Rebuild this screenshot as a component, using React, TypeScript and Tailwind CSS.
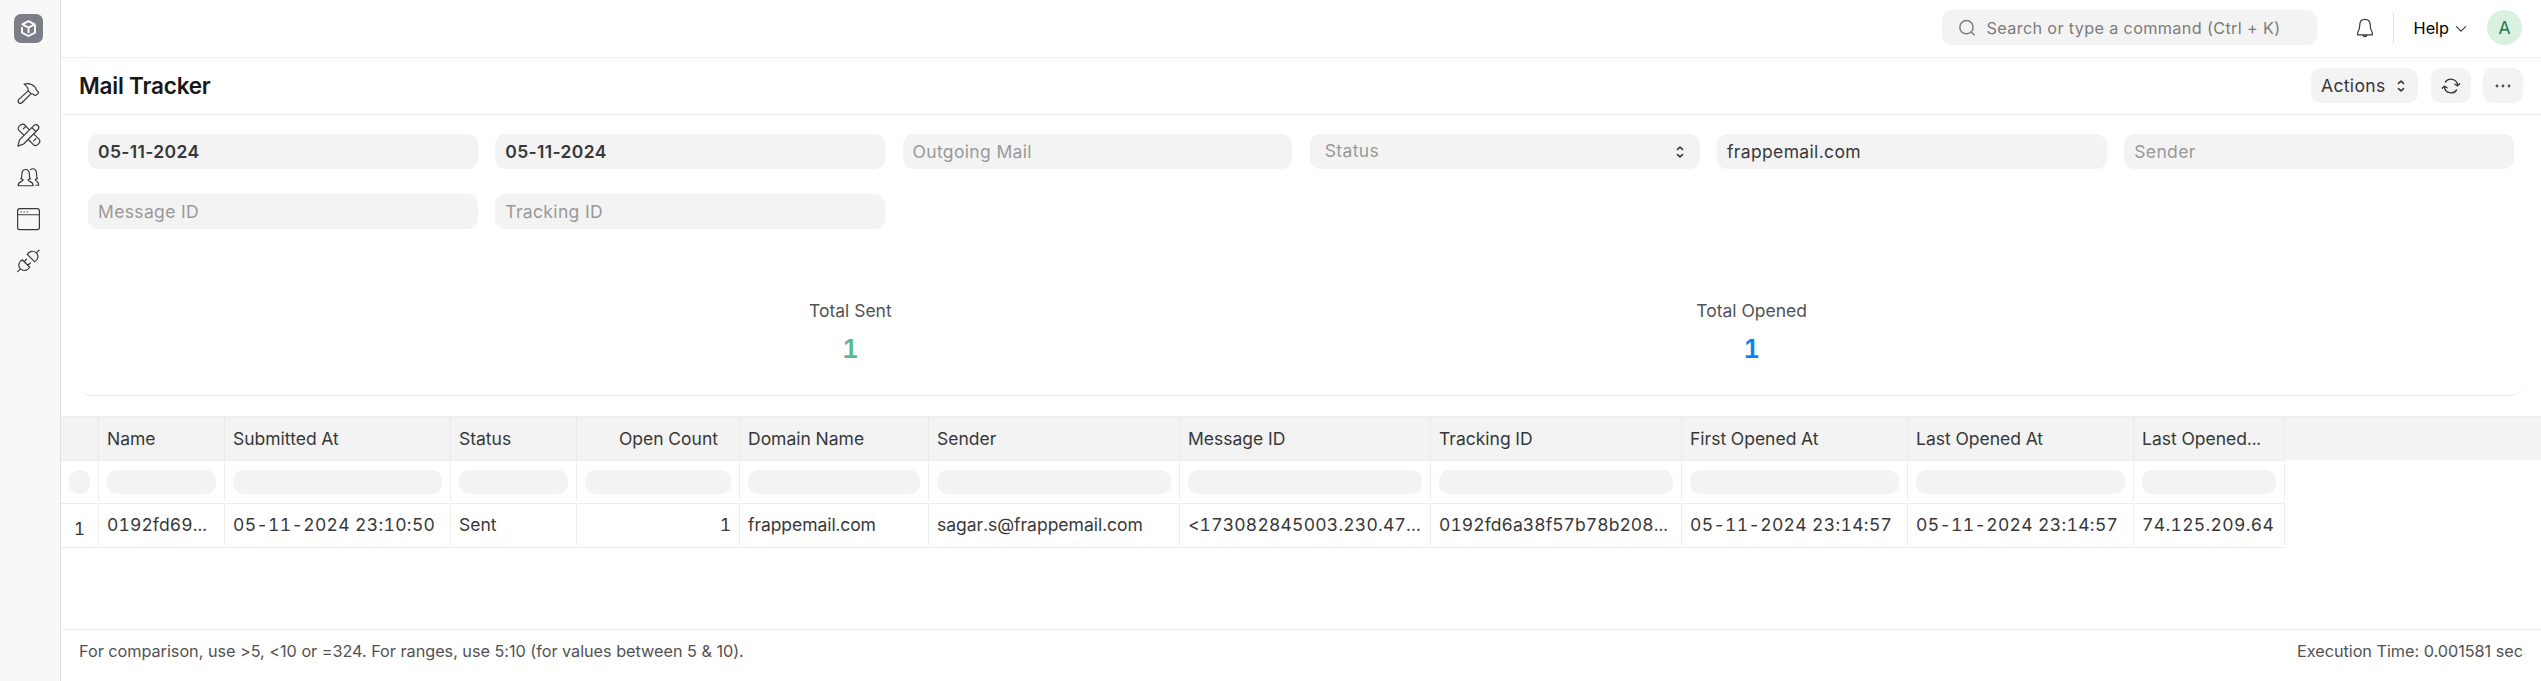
import React from "react";

const Sort = ({ className = "" }: { className?: string }) => (
  <svg className={className} width="20" height="20" viewBox="0 0 16 16" fill="none" stroke="#383838" strokeWidth="1.250" strokeLinecap="round" strokeLinejoin="round">
    <path d="M6 5.900 8 4.100l2 1.800M6 10.100 8 11.900l2-1.800" />
  </svg>
);

const side = { width: 25, height: 25, viewBox: "0 0 20 20", fill: "none", stroke: "#383838", strokeWidth: 0.95, strokeLinecap: "round", strokeLinejoin: "round" } as const;

const Sidebar = () => (
  <aside className="flex w-[61px] shrink-0 flex-col items-center border-r border-[#e2e2e2] bg-[#f8f8f8] pr-[3px] pt-[14px]">
    <svg width="29" height="29" viewBox="0 0 29 29">
      <rect width="29" height="29" rx="7" fill="#7c7f88" />
      <g fill="none" stroke="#fff" strokeWidth="1.9" strokeLinejoin="round">
        <path d="M14.5 7.2 20.6 10.4 14.5 13.6 8.4 10.4ZM8 13v5.6l6.5 3.4 6.5-3.4V11M14.5 13.6V19" />
      </g>
    </svg>
    <nav className="mt-[38px] flex flex-col gap-[17px]">
      <svg {...side}>
        <path d="M6.8 2.4c3-.9 6.600 0 8.600 2.200 1 1.100 1 2.400 1.600 3l1.200.9-.1 1.300-1.900 1.600-1.300-.2c-.6-.7-1.600-1.200-2.600-1.200L5.300 17.100c-1 1-2.500.9-3-.1-.6-.8-.3-1.900.5-2.600l7.300-6.600c.2-1.900-.7-3.500-3.300-5.400ZM10.100 7.800l2.200 2.200" transform="translate(-.3 .1)" />
      </svg>
      <svg {...side}>
        <path d="M1.500 18.500l1.300-5L14.200 2.100c1-1 2.400-1 3.300-.1s.9 2.400-.1 3.400L6.100 16.800ZM12.700 3.700l3.200 3.100M6.400 9.900 2.300 5.900c-1-1-.6-2.500.8-3.800s2.900-1.600 3.900-.5l3.600 3.900M10 13.400l4.100 4.100c1 1 2.600.5 3.900-.8s1.400-2.700.4-3.800l-4.100-4M5.800 4.700l1.700-1.600M14.200 14.200l1.700-1.700" />
      </svg>
      <svg {...side}>
        <path d="M5.900 11.200c-1.200-.3-1.700-.5-1.700-.5C5.200 9.600 4.900 8.300 5 6.500 5.200 4.300 6.300 3.200 8 3.200s2.800 1.100 3 3.300c.1 1.800-.2 3.100.8 4.200 0 0-.5.200-1.700.5-.3 1 .4 1.300 1.500 1.700 1.700.6 2.400 1.200 2.400 3.300H2c0-2.100.7-2.700 2.400-3.300 1.100-.4 1.800-.7 1.500-1.700ZM12 3.300c.4-.5 1-.700 1.700-.7 1.700 0 2.800 1.200 3 3.300.1 1.800-.1 3.500.8 4.600l-1.700.6c-.2.900.3 1.200 1.100 1.500 1.200.5 1.500 1.300 1.500 3.200h-2.200" transform="translate(-.3 .4)" />
      </svg>
      <svg {...side}>
        <rect x="1.300" y="1.300" width="17.400" height="16.800" rx="1.700" />
        <path d="M1.300 6.200h17.400M4 3.900h.1M6.500 3.900h.1M9 3.900h.1" />
      </svg>
      <svg {...side}>
        <path d="m1.300 18.700 2.200-2.200M18.500 1.500l-2.200 2.200M5 9.200l6 6c-1.800 2.700-5 3.500-7.500 1.300C1.300 14 2.100 11 5 9.200ZM9 4.900l6 6c2.700-1.900 3.500-4.700 1.300-7.200C13.800 1.500 10.700 2.200 9 4.900ZM6.500 10.700l1.900-1.900M9.500 13.700l1.900-1.900" transform="translate(0 -.6)" />
      </svg>
    </nav>
  </aside>
);

const field = "flex h-[35px] items-center rounded-[10px] bg-[#f3f3f3] px-[10px] text-[17.5px] tracking-[0.35px]";

const columns = [
  { w: "w-[126px]", h: "Name", v: "0192fd69...", t: "tracking-[0.12px]" },
  { w: "w-[226px]", h: "Submitted At", v: "05-11-2024 23:10:50", t: "tracking-[0.35px]" },
  { w: "w-[126px]", h: "Status", v: "Sent", t: "" },
  { w: "w-[163px]", h: "Open Count", v: "1", right: true, t: "" },
  { w: "w-[189px]", h: "Domain Name", v: "frappemail.com", t: "tracking-[-0.06px]" },
  { w: "w-[251px]", h: "Sender", v: "sagar.s@frappemail.com", t: "" },
  { w: "w-[251px]", h: "Message ID", v: "<173082845003.230.47...", t: "tracking-[0.22px]" },
  { w: "w-[251px]", h: "Tracking ID", v: "0192fd6a38f57b78b208...", t: "tracking-[0.07px]" },
  { w: "w-[226px]", h: "First Opened At", v: "05-11-2024 23:14:57", t: "tracking-[0.35px]" },
  { w: "w-[226px]", h: "Last Opened At", v: "05-11-2024 23:14:57", t: "tracking-[0.35px]" },
  { w: "w-[151px]", h: "Last Opened...", v: "74.125.209.64", t: "tracking-[0.35px]" },
];

export default function App() {
  return (
    <div className="flex h-[681px] w-[2541px] overflow-hidden bg-white font-[Inter,sans-serif] text-[17.5px] leading-[20px] text-[#383838]">
      <Sidebar />
      <div className="flex min-w-0 flex-1 flex-col">
        <header className="flex h-[58px] shrink-0 items-start justify-end border-b border-[#ededed] pr-[19px] pt-[10px]">
          <div className="flex h-[35px] w-[375px] items-center rounded-[10px] bg-[#f3f3f3] pl-[16px] text-[16.25px] tracking-[0.33px] text-[#7c7c7c]">
            <svg className="mr-[11px]" width="18" height="18" viewBox="0 0 16 16" fill="none" stroke="#7c7c7c" strokeWidth="1.3" strokeLinecap="round">
              <circle cx="7.500" cy="7.300" r="5.900" />
              <path d="m11.800 11.600 2.600 2.600" />
            </svg>
            Search or type a command (Ctrl + K)
          </div>
          <svg className="ml-[38px] mt-[7px]" width="20" height="22" viewBox="0 0 20 22" fill="none" stroke="#383838" strokeWidth="1.200" strokeLinejoin="round">
            <path d="M10 2.300C6.500 2.300 4.800 4.600 4.800 7.700c0 4-.6 5.800-2.100 7.600v2.500h14.600v-2.500c-1.500-1.800-2.100-3.600-2.100-7.600C15.200 4.600 13.500 2.300 10 2.300ZM8 18c.3 1.200 1 1.600 2 1.600s1.700-.4 2-1.600" />
          </svg>
          <div className="ml-[18px] mt-[3px] h-[30px] w-px bg-[#dcdcdc]" />
          <div className="ml-[20px] flex h-[35px] items-center text-[16.25px] text-black">
            Help
            <svg className="ml-[6px] mt-[3px]" width="12" height="8" viewBox="0 0 12 8" fill="none" stroke="#383838" strokeWidth="1.100" strokeLinecap="round" strokeLinejoin="round"><path d="m1.400 1.600 4.600 4.600 4.600-4.600" /></svg>
          </div>
          <div className="ml-[20px] flex size-[35px] items-center justify-center rounded-full bg-[#daf0e1] text-[17.5px] text-[#16794c]">A</div>
        </header>

        <div className="flex h-[57px] shrink-0 items-center justify-between border-b border-[#ededed] pb-px pl-[18px] pr-[18px]">
          <h1 className="text-[22.5px] font-semibold leading-[28px] tracking-[-0.2px] text-[#171717]">Mail Tracker</h1>
          <div className="flex">
            <div className="flex h-[35px] w-[107px] items-center rounded-[10px] bg-[#f3f3f3] pl-[10px] tracking-[0.35px]">
              Actions <Sort className="ml-[5px]" />
            </div>
            <div className="ml-[13px] flex h-[35px] w-[40px] items-center justify-center rounded-[10px] bg-[#f3f3f3]">
              <svg width="20" height="20" viewBox="0 0 20 20" fill="none" stroke="#383838" strokeWidth="1.300" strokeLinecap="round" strokeLinejoin="round">
                <path d="M3.400 11.500A6.800 6.800 0 0 0 15.600 14M16.600 8.500A6.800 6.800 0 0 0 4.400 6M1.300 12.300l2.100-2.200 2.700 1.700M18.700 7.700l-2.100 2.200-2.700-1.700" />
              </svg>
            </div>
            <div className="ml-[12px] flex h-[35px] w-[40px] items-center justify-center rounded-[10px] bg-[#f3f3f3]">
              <svg width="20" height="20" viewBox="0 0 20 20" fill="#525252"><circle cx="4" cy="10" r="1.400" /><circle cx="10" cy="10" r="1.400" /><circle cx="16" cy="10" r="1.400" /></svg>
            </div>
          </div>
        </div>

        <div className="grid grid-cols-6 gap-x-[17.5px] gap-y-[25px] px-[27px] pt-[19px] text-[#999]">
          <div className={field + " font-semibold text-[#383838]"}>05-11-2024</div>
          <div className={field + " font-semibold text-[#383838]"}>05-11-2024</div>
          <div className={field}>Outgoing Mail</div>
          <div className={field + " justify-between"}>
            <span className="pb-[2px] pl-[5px]">Status</span>
            <Sort />
          </div>
          <div className={field + " text-[#383838]"}>frappemail.com</div>
          <div className={field}>Sender</div>
          <div className={field}>Message ID</div>
          <div className={field}>Tracking ID</div>
        </div>

        <div className="mx-[18px] mt-[46px] flex h-[121px] justify-evenly rounded-b-[12px] border-b border-[#ededed] pt-[26px]">
          <div className="flex w-[260px] flex-col items-center">
            <div className="text-[#525252]">Total Sent</div>
            <div className="mt-[12px] text-[26px] font-semibold leading-[32px] tabular-nums text-[#59ba8b]">1</div>
          </div>
          <div className="flex w-[260px] flex-col items-center">
            <div className="text-[#525252]">Total Opened</div>
            <div className="mt-[12px] text-[26px] font-semibold leading-[32px] tabular-nums text-[#0289f7]">1</div>
          </div>
        </div>

        <div className="mt-[20px] tabular-nums">
          <div className="flex h-[44px] border-t border-[#ededed] bg-[#f3f3f3]">
            <div className="h-[42px] w-[38px] border-r border-[#e9e9e9]" />
            {columns.map((c, i) => (
              <div key={i} className={`${c.w} flex h-[42px] items-center whitespace-nowrap border-r border-[#e9e9e9] pl-[8px] pt-[2px] ${c.right ? "justify-end pr-[21px]" : ""}`}>{c.h}</div>
            ))}
          </div>
          <div className="flex h-[44px] w-[2224px] border-b border-t border-[#ededed]">
            <div className="h-[40px] w-[38px] border-r border-[#ededed] px-[8px] pt-[9px]"><div className="h-[24px] rounded-[10px] bg-[#f3f3f3]" /></div>
            {columns.map((c, i) => (
              <div key={i} className={`${c.w} h-[40px] border-r border-[#ededed] px-[8px] pt-[9px]`}><div className="h-[24px] rounded-[10px] bg-[#f3f3f3]" /></div>
            ))}
          </div>
          <div className="flex h-[44px] w-[2224px] border-b border-[#ededed]">
            <div className="flex h-[41px] w-[38px] items-center justify-center border-r border-[#ededed] pt-[8px]">1</div>
            {columns.map((c, i) => (
              <div key={i} className={`${c.w} ${c.t} flex h-[41px] items-center whitespace-nowrap border-r border-[#ededed] pl-[8px] pt-px ${c.right ? "justify-end pr-[8px]" : ""}`}>{c.v}</div>
            ))}
          </div>
        </div>

        <footer className="mt-auto flex h-[52px] items-start justify-between border-t border-[#ededed] px-[18px] pt-[11px] text-[16.25px] tracking-[-0.03px] text-[#525252]">
          <span>For comparison, use &gt;5, &lt;10 or =324. For ranges, use 5:10 (for values between 5 &amp; 10).</span>
          <span>Execution Time: 0.001581 sec</span>
        </footer>
      </div>
    </div>
  );
}
